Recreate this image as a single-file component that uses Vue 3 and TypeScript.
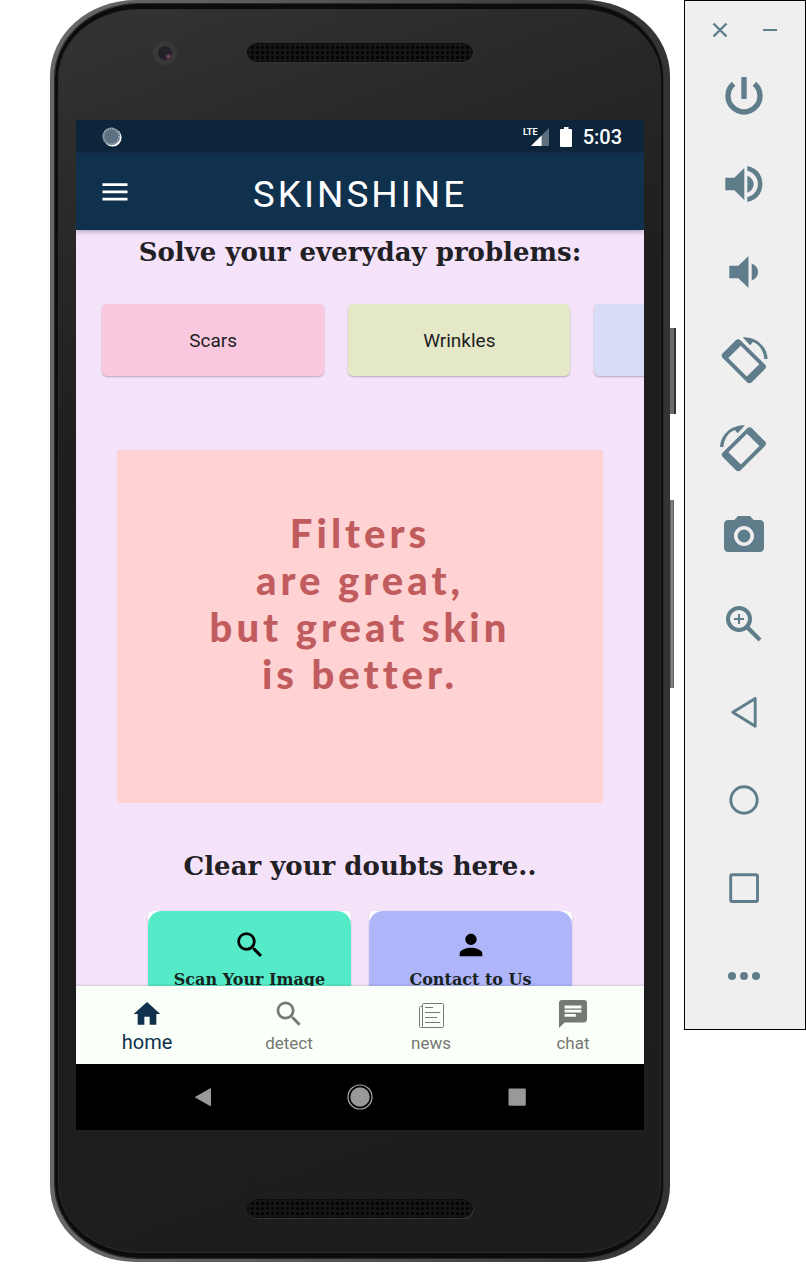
<script setup lang="ts">
interface Tab {
  id: string
  label: string
}

const concerns = [
  { label: 'Scars', tone: 'pink' },
  { label: 'Wrinkles', tone: 'lime' },
  { label: '', tone: 'blue' },
]

const quote: string[] = ['Filters', 'are great,', 'but great skin', 'is better.']

const tabs: Tab[] = [
  { id: 'home', label: 'home' },
  { id: 'detect', label: 'detect' },
  { id: 'news', label: 'news' },
  { id: 'chat', label: 'chat' },
]
const activeTab = 'home'

const tools: string[] = [
  'Power', 'Volume up', 'Volume down', 'Rotate left', 'Rotate right', 'Screenshot',
  'Zoom', 'Back', 'Home', 'Overview', 'More',
]
</script>

<template>
  <div class="desk">
    <div class="phone">
      <span class="key key-power"></span>
      <span class="key key-volume"></span>
      <div class="glass">
        <div class="bezel bezel-top">
          <span class="camera"></span>
          <span class="speaker speaker-top"></span>
          <span></span>
        </div>

        <div class="screen">
          <div class="status">
            <svg class="spinner" viewBox="0 0 20 20" width="20" height="20" aria-hidden="true">
              <circle cx="10.6" cy="10.6" r="9" fill="#fff" />
              <circle cx="9.3" cy="9.3" r="8.9" fill="#5b7183" />
              <circle cx="9.3" cy="9.3" r="7.8" fill="none" stroke="#a9b5be" stroke-width="2" stroke-dasharray="1 1.2" />
            </svg>
            <div class="status-right">
              <svg viewBox="0 0 26 22" width="26" height="22" aria-hidden="true">
                <path d="M26 2V20H8Z" fill="#5b6e7c" />
                <path d="M18.6 9.4V20H8Z" fill="#fff" />
                <text x="0" y="9" class="lte">LTE</text>
              </svg>
              <svg viewBox="0 0 12 20" width="12" height="20" aria-hidden="true">
                <path d="M4 0H8.500V2H11a1 1 0 0 1 1 1V19a1 1 0 0 1-1 1H1a1 1 0 0 1-1-1V3a1 1 0 0 1 1-1H4Z" fill="#fff" />
              </svg>
              <span class="clock">5:03</span>
            </div>
          </div>

          <header class="appbar">
            <button class="menu" type="button" aria-label="Menu">
              <svg viewBox="0 0 26 18" width="26" height="18">
                <path d="M.5 1.700H25.500M.5 8.900H25.500M.5 16.100H25.500" stroke="#fff" stroke-width="2.800" />
              </svg>
            </button>
            <h1>SKINSHINE</h1>
          </header>

          <main class="content">
            <h2 class="heading">Solve your everyday problems:</h2>
            <div class="concerns">
              <button v-for="c in concerns" :key="c.tone" type="button" class="concern" :class="c.tone">
                {{ c.label }}
              </button>
            </div>
            <div class="quote">
              <p v-for="line in quote" :key="line">{{ line }}</p>
            </div>
            <h2 class="heading">Clear your doubts here..</h2>
            <div class="tiles">
              <button type="button" class="tile">
                <span class="tile-face mint">
                  <svg viewBox="0 0 24 24" width="34" height="34">
                    <path d="M15.500 14h-.790l-.280-.270A6.470 6.470 0 0 0 16 9.500 6.500 6.500 0 1 0 9.500 16c1.610 0 3.090-.590 4.230-1.570l.270.280v.790l5 4.990L20.490 19zm-6 0C7.010 14 5 11.990 5 9.500S7.010 5 9.500 5 14 7.010 14 9.500 11.990 14 9.500 14z" />
                  </svg>
                  <span>Scan Your Image</span>
                </span>
              </button>
              <button type="button" class="tile">
                <span class="tile-face lilac">
                  <svg viewBox="0 0 24 24" width="34" height="34">
                    <path d="M12 12c2.210 0 4-1.790 4-4s-1.790-4-4-4-4 1.790-4 4 1.790 4 4 4zm0 2c-2.670 0-8 1.340-8 4v2h16v-2c0-2.660-5.330-4-8-4z" />
                  </svg>
                  <span>Contact to Us</span>
                </span>
              </button>
            </div>
          </main>

          <nav class="tabs">
            <button v-for="t in tabs" :key="t.id" type="button" class="tab" :class="{ active: t.id === activeTab }">
              <svg v-if="t.id === 'home'" viewBox="0 0 24 24" width="32" height="32">
                <path d="M10 20v-6h4v6h5v-8h3L12 3 2 12h3v8z" fill="currentColor" />
              </svg>
              <svg v-else-if="t.id === 'detect'" viewBox="0.400 0.400 23.200 23.200" width="32" height="32">
                <path fill="currentColor" d="M15.500 14h-.790l-.280-.270A6.470 6.470 0 0 0 16 9.500 6.500 6.500 0 1 0 9.500 16c1.610 0 3.090-.590 4.230-1.570l.270.280v.790l5 4.990L20.490 19zm-6 0C7.010 14 5 11.990 5 9.500S7.010 5 9.500 5 14 7.010 14 9.500 11.990 14 9.500 14z" />
              </svg>
              <svg v-else-if="t.id === 'news'" viewBox="0 0 32 32" width="32" height="32" fill="none" stroke="currentColor">
                <rect x="7.500" y="5.500" width="21" height="24" rx="1" stroke-width="1" />
                <path d="M7 8.500H5.500a1 1 0 0 0-1 1V28.500a1 1 0 0 0 1 1H8" stroke-width="1" />
                <path d="M10 9.500H18M10 14.500H25.300M10 19.500H22M10 24.500H25.300" stroke-width="1" />
              </svg>
              <svg v-else viewBox="0.600 0.600 22.800 22.800" width="32" height="32">
                <path fill="currentColor" d="M20 2H4c-1.100 0-1.990.900-1.990 2L2 22l4-4h14c1.100 0 2-.900 2-2V4c0-1.100-.900-2-2-2zM6 9h12v2H6V9zm8 5H6v-2h8v2zm4-6H6V6h12v2z" />
              </svg>
              <span>{{ t.label }}</span>
            </button>
          </nav>

          <div class="sysnav">
            <button type="button" aria-label="Back">
              <svg viewBox="0 0 26 26" width="26" height="26">
                <path d="M5.500 13.200 20.500 4.600V21.800Z" fill="#999" stroke="#999" stroke-linejoin="round" />
              </svg>
            </button>
            <button type="button" aria-label="Home">
              <svg viewBox="0 0 26 26" width="26" height="26">
                <circle cx="13" cy="13" r="12" fill="none" stroke="#aaa" stroke-width="1.200" />
                <circle cx="13" cy="13" r="9.700" fill="#999" />
              </svg>
            </button>
            <button type="button" aria-label="Overview">
              <svg viewBox="0 0 26 26" width="26" height="26">
                <rect x="4.500" y="4.500" width="17.300" height="17.300" rx="1" fill="#999" />
              </svg>
            </button>
          </div>
        </div>

        <div class="bezel bezel-bottom">
          <span class="speaker"></span>
        </div>
      </div>
    </div>

    <aside class="toolbar">
      <div class="window">
        <button type="button" aria-label="Close">
          <svg viewBox="0 0 20 20" width="20" height="20">
            <path d="M3.500 3.500 16.500 16.500M16.500 3.500 3.500 16.500" stroke="#607d8b" stroke-width="2.400" />
          </svg>
        </button>
        <button type="button" aria-label="Minimize">
          <svg viewBox="0 0 20 20" width="20" height="20">
            <path d="M3 10H17" stroke="#607d8b" stroke-width="2" />
          </svg>
        </button>
      </div>
      <button v-for="tool in tools" :key="tool" type="button" class="tool" :aria-label="tool">
        <svg viewBox="0 0 48 48" width="48" height="48">
          <g v-if="tool === 'Power'" class="line">
            <path d="M13.600 11.800A16 16 0 1 0 34.400 11.800" stroke-width="5.400" />
            <path d="M24 5V27" stroke-width="5.400" />
          </g>
          <g v-else-if="tool === 'Volume up'">
            <path d="M5.300 17.700H14.300L24.300 8V40L14.300 30.200H5.300Z" />
            <path d="M27.300 15.700C35.800 19 35.800 29.400 27.300 32.700Z" />
            <path d="M27.300 6C47.500 9.500 47.500 38.500 27.300 42V37.200C41.500 33.500 41.500 14.500 27.300 10.800Z" />
          </g>
          <g v-else-if="tool === 'Volume down'">
            <path d="M9.300 17.700H18.300L28.500 8V40L18.300 30.200H9.300Z" />
            <path d="M31.700 15.400C40.200 18.700 40.200 29.100 31.700 32.400Z" />
          </g>
          <g v-else-if="tool === 'Rotate left' || tool === 'Rotate right'" :transform="tool === 'Rotate right' ? 'translate(47.7 0) scale(-1 1)' : undefined">
            <path fill-rule="evenodd" d="M16 4Q18 2.300 20.200 4L45.200 28.700Q46.900 30.700 45.200 32.800L31.500 46.400Q29.300 48 27.300 46.400L2.500 21.700Q.9 19.700 2.500 17.600ZM20.700 9.700 8.300 22 26.800 40.600 39.300 28.200Z" />
            <path d="M22.700 1.200C36 .6 47 10 47.700 23H44.300C43.500 14.500 39.500 8.500 33 5.900L30 9.300Z" />
          </g>
          <path v-else-if="tool === 'Screenshot'" transform="scale(2)" d="M9 2 7.170 4H4c-1.100 0-2 .900-2 2v12c0 1.100.900 2 2 2h16c1.100 0 2-.900 2-2V6c0-1.100-.900-2-2-2h-3.170L15 2H9zm3 15c-2.760 0-5-2.240-5-5s2.240-5 5-5 5 2.240 5 5-2.240 5-5 5zm0-1.800a3.200 3.200 0 1 0 0-6.400 3.200 3.200 0 0 0 0 6.400z" />
          <g v-else-if="tool === 'Zoom'" class="line">
            <circle cx="19" cy="19" r="11" stroke-width="4" />
            <path d="M14 19H24M19 14V24" stroke-width="2" />
            <path d="M27 27 40 40" stroke-width="4.200" />
          </g>
          <path v-else-if="tool === 'Back'" class="line" d="M12.800 24.300 35.200 10.500V38.200Z" stroke-width="2.900" stroke-linejoin="round" />
          <circle v-else-if="tool === 'Home'" class="line" cx="24" cy="24" r="13.200" stroke-width="2.900" />
          <rect v-else-if="tool === 'Overview'" class="line" x="10.700" y="10.700" width="26.800" height="26.800" rx="1.500" stroke-width="2.900" />
          <g v-else>
            <circle cx="12" cy="24" r="4" />
            <circle cx="24" cy="24" r="4" />
            <circle cx="36" cy="24" r="4" />
          </g>
        </svg>
      </button>
    </aside>
  </div>
</template>

<style>
body {
  margin: 0;
  background: #fff;
}
</style>

<style scoped>
.desk {
  display: flex;
  align-items: flex-start;
  gap: 14px;
  padding-left: 50px;
  font-family: Roboto, "Liberation Sans", sans-serif;
}

button {
  border: 0;
  padding: 0;
  margin: 0;
  background: none;
  font: inherit;
  color: inherit;
}

svg {
  display: block;
}

.phone {
  position: relative;
  flex: 1;
  box-sizing: border-box;
  padding: 4px 7px 4px 5px;
  border-radius: 86px / 76px;
  background: linear-gradient(to right, #686868, #5c5c5c 30%, #4a4a4a 60%, #343233);
}

.key {
  position: absolute;
  left: 100%;
}

.key-power {
  top: 328px;
  width: 6px;
  height: 86px;
  background: linear-gradient(to right, #6b6b6b 60%, #333 60%);
}

.key-volume {
  top: 500px;
  width: 4px;
  height: 188px;
  background: linear-gradient(to right, #555, #908f8a 50%, #555);
}

.glass {
  border: solid #0c0c0c;
  border-width: 5px 2px 5px 3px;
  border-radius: 84px / 74px;
  padding: 0 17px 0 18px;
  background: linear-gradient(160deg, #343434, #2b2b2b 12%, #1e1e1e 32%, #1d1d1d);
  box-shadow: 0 0 0 1px #292929, inset 0 0 0 1px #2c2c2c;
}

.bezel {
  display: grid;
  justify-items: center;
}

.bezel-top {
  grid-template-columns: 1fr 226px 1fr;
  align-items: center;
  height: 87px;
  padding-bottom: 24px;
}

.bezel-bottom {
  height: 54px;
  padding-top: 69px;
}

.camera {
  box-sizing: border-box;
  width: 24px;
  height: 24px;
  margin-left: 6px;
  border: 5px solid #393839;
  border-radius: 50%;
  background: radial-gradient(circle at 75% 75%, #70485a 0 1px, #25222a 3px, #211f26);
}

.speaker {
  width: 226px;
  height: 19px;
  border-radius: 10px;
  background-color: #151515;
  background-image: radial-gradient(circle, #030303 0 1px, transparent 2px);
  background-size: 5px 5px;
  background-position: 3px 2px;
  box-shadow: 1px 1px 0 #353535;
}

.screen {
  display: flex;
  flex-direction: column;
  aspect-ratio: 568 / 1010;
  overflow: hidden;
  background: #f5e3fa;
}

.status {
  display: flex;
  flex: none;
  align-items: center;
  justify-content: space-between;
  height: 33px;
  padding: 0 22px 0 26px;
  background: #0c253b;
  color: #fff;
}

.status-right {
  display: flex;
  align-items: center;
  gap: 11px;
}

.lte {
  fill: #fff;
  font: 700 9px Roboto, sans-serif;
}

.clock {
  font-size: 20px;
  font-weight: 500;
  line-height: 24px;
}

.appbar {
  position: relative;
  z-index: 1;
  display: grid;
  grid-template-columns: 26px 1fr 26px;
  flex: none;
  align-items: center;
  height: 77px;
  padding: 0 26px;
  background: #10314e;
  box-shadow: 0 1px 5px #4c416180;
  color: #fff;
}

h1 {
  margin: 0;
  padding-top: 5px;
  font-size: 37px;
  font-weight: 400;
  letter-spacing: 3px;
  text-align: center;
}

.content {
  flex: 1;
  min-height: 0;
  overflow: hidden;
}

.heading {
  margin: 0;
  font: 700 26px/44px "Roboto Slab", "DejaVu Serif", serif;
  text-align: center;
  white-space: nowrap;
  color: #212024;
}

.concerns {
  display: flex;
  gap: 24px;
  padding: 30px 0 74px 26px;
}

.concern {
  flex: none;
  width: 41%;
  height: 72px;
  border-radius: 5px;
  box-shadow: 0 1px 2px #0004;
  font-size: 19px;
  color: #211d22;
}

.pink {
  background: #fac8de;
}

.lime {
  background: #e4e8c7;
}

.blue {
  background: #d8dcf7;
}

.quote {
  box-sizing: border-box;
  height: 353px;
  margin: 0 41px;
  padding-top: 60px;
  background: #ffd3d3;
  color: #c15c5e;
  font: 900 40px/47px Lato, sans-serif;
  letter-spacing: 4px;
  text-align: center;
}

.quote p {
  margin: 0;
}

.quote + .heading {
  padding-top: 41px;
}

.tiles {
  display: grid;
  grid-template-columns: 1fr 1fr;
  gap: 18px;
  padding: 23px 72px 0;
}

.tile {
  height: 140px;
  border-radius: 5px;
  background: #fff;
  box-shadow: 0 1px 2px #0003;
}

.tile-face {
  display: flex;
  box-sizing: border-box;
  flex-direction: column;
  align-items: center;
  gap: 6px;
  height: 100%;
  padding-top: 17px;
  border-radius: 14px;
  font: 700 16px/24px "Roboto Slab", "DejaVu Serif", serif;
  white-space: nowrap;
  color: #18221f;
}

.mint {
  background: #56ebc8;
}

.lilac {
  background: #aeb6f9;
}

.tabs {
  position: relative;
  display: grid;
  grid-template-columns: repeat(4, 1fr);
  flex: none;
  height: 78px;
  background: #fafff9;
  box-shadow: 0 -1px 2px #0002;
}

.tab {
  display: flex;
  flex-direction: column;
  align-items: center;
  padding-top: 12px;
  font-size: 17px;
  line-height: 26px;
  color: #757873;
}

.tab.active {
  font-size: 20px;
  line-height: 24px;
  color: #10314e;
}

.sysnav {
  display: grid;
  grid-template-columns: repeat(3, 1fr);
  flex: none;
  place-items: center;
  height: 66px;
  padding: 0 49px;
  background: #000;
}

.toolbar {
  display: flex;
  flex: none;
  flex-direction: column;
  align-items: center;
  gap: 40px;
  box-sizing: border-box;
  width: 122px;
  padding: 5px 2px 29px 0;
  border: 1px solid #000;
  background: #efefef;
}

.window {
  display: flex;
  gap: 30px;
  align-items: center;
  height: 48px;
  padding-left: 2px;
  margin-bottom: -22px;
}

.tool svg {
  fill: #607d8b;
}

.tool .line {
  fill: none;
  stroke: #607d8b;
}
</style>
